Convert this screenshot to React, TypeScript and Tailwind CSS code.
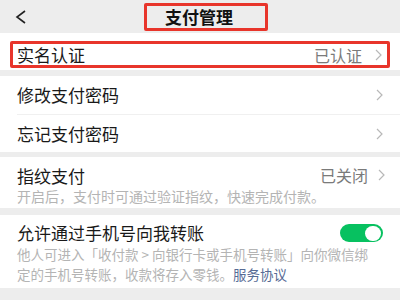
const font = { fontFamily: '"Noto Sans CJK SC", "Noto Sans", sans-serif' };

function Chevron() {
  return (
    <svg width="7" height="12" viewBox="0 0 7 12" className="shrink-0">
      <polyline points="1,1 6,6 1,11" fill="none" stroke="#b8b8b8" strokeWidth="1.2" />
    </svg>
  );
}

function Row({ label, tall }: { label: string; tall?: boolean }) {
  return (
    <div className={`flex items-center justify-between pl-[17px] pr-[17px] ${tall ? "h-[38px]" : "h-[37px]"}`}>
      <span className="text-[17px] text-[#191919]">{label}</span>
      <Chevron />
    </div>
  );
}

export default function App() {
  return (
    <div className="w-[400px] h-[300px] bg-[#ededed] overflow-hidden" style={font}>
      <div className="flex items-center h-[33px] pl-[15px]">
        <svg width="11" height="14" viewBox="0 0 11 14">
          <polyline points="10,1 2,7 10,13" fill="none" stroke="#222" strokeWidth="1.6" />
        </svg>
        <div className="ml-[118px] w-[124px] h-[28px] border-[3px] border-[#e8352b] rounded-[2px] flex items-center pl-[18px]">
          <span className="text-[17px] font-bold text-[#111] leading-none">支付管理</span>
        </div>
      </div>

      <div className="bg-white pt-[8px] pb-[2px] px-[10px]">
        <div className="h-[27px] border-[3px] border-[#e8352b] rounded-[2px] flex items-center justify-between pl-[4px] pr-[5px]">
          <span className="text-[17px] text-[#191919] leading-none">实名认证</span>
          <div className="flex items-center gap-[13px]">
            <span className="text-[16px] text-[#7a7a7a] leading-none">已认证</span>
            <Chevron />
          </div>
        </div>
      </div>

      <div className="mt-[6px] bg-white">
        <Row label="修改支付密码" tall />
        <div className="ml-[17px] h-px bg-[#f0f0f0]" />
        <Row label="忘记支付密码" />
      </div>

      <div className="mt-[5px] bg-white h-[51px] pl-[17px] pr-[15px] pt-[7px]">
        <div className="flex items-center justify-between h-[22px]">
          <span className="text-[17px] text-[#191919] leading-none">指纹支付</span>
          <div className="flex items-center gap-[10px]">
            <span className="text-[16px] text-[#7a7a7a] leading-none">已关闭</span>
            <Chevron />
          </div>
        </div>
        <div className="text-[14px] text-[#b4b4b4] leading-[18px] mt-px">开启后，支付时可通过验证指纹，快速完成付款。</div>
      </div>

      <div className="mt-[7px] bg-white h-[73px] pl-[17px] pr-[17px] pt-[6px]">
        <div className="flex items-center justify-between h-[24px]">
          <span className="text-[17px] text-[#191919] leading-[24px]">允许通过手机号向我转账</span>
          <div className="w-[43px] h-[18px] rounded-full bg-[#07c160] flex items-center justify-end pr-[2px]">
            <div className="w-[16px] h-[15px] rounded-full bg-white" />
          </div>
        </div>
        <div className="text-[13.5px] text-[#b4b4b4] leading-[19.5px] whitespace-nowrap">
          <div>他人可进入「收付款 &gt; 向银行卡或手机号转账」向你微信绑</div>
          <div>
            定的手机号转账，收款将存入零钱。<span className="text-[#576b95]">服务协议</span>
          </div>
        </div>
      </div>
    </div>
  );
}
